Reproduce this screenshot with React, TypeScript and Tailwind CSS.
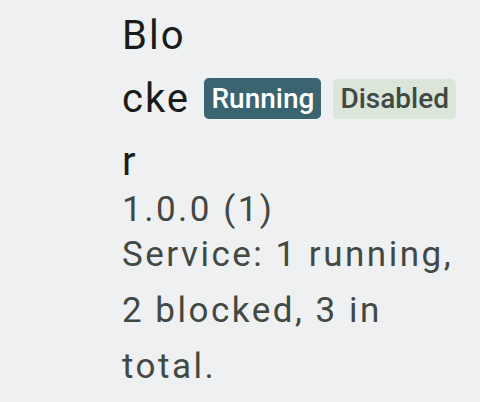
import React from "react";

export default function App() {
  return (
    <div className="min-h-screen w-full bg-[#eff0f2] pl-[122px] pr-[24px] pt-[4px] font-['Roboto',sans-serif]">
      <div className="flex items-center">
        <div className="min-w-0 shrink break-all text-[40px] leading-[63px] tracking-[2px] text-[#1b1c1a]">
          Blocker
        </div>
        <div className="ml-[10px] flex shrink-0 items-center gap-[12px]">
          <span className="rounded-[5px] bg-[#3a6470] px-[7px] text-[28px] font-medium leading-[41px] text-white">
            Running
          </span>
          <span className="rounded-[5px] bg-[#dce5da] px-[7px] text-[28px] font-medium leading-[40px] text-[#3f4a43]">
            Disabled
          </span>
        </div>
      </div>
      <div className="text-[35px] leading-[34px] tracking-[2.5px] text-[#424943]">1.0.0 (1)</div>
      <div className="text-[35px] leading-[56px] tracking-[2.5px] text-[#424943]">
        Service: 1 running, 2 blocked, 3 in total.
      </div>
    </div>
  );
}
